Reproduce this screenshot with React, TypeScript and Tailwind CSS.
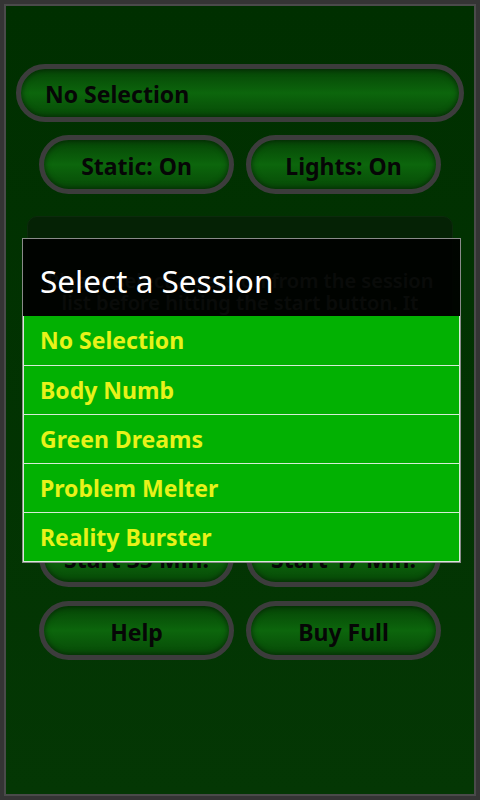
import React from "react";

const font = { fontFamily: '"Noto Sans", "Open Sans", "DejaVu Sans", sans-serif' };

function Pill({ label, className = "", align = "center" }: { label: string; className?: string; align?: "center" | "left" }) {
  return (
    <div
      className={`rounded-full border-[5px] border-[#3c3c3c] bg-gradient-to-b from-[#064506] via-[#0c660c] to-[#074a07] shadow-[inset_0_0_6px_rgba(0,0,0,0.6)] flex items-center pt-[3px] ${
        align === "center" ? "justify-center" : "justify-start pl-[24px]"
      } ${className}`}
    >
      <span className="text-[23px] font-bold text-[#060606] leading-none">{label}</span>
    </div>
  );
}

const items = ["No Selection", "Body Numb", "Green Dreams", "Problem Melter", "Reality Burster"];

export default function App() {
  return (
    <div className="relative w-[480px] h-[800px] bg-[#343434] p-[4px]" style={font}>
      <div className="w-full h-full border-[2px] border-[#4a4a4a] bg-gradient-to-b from-[#002f00] to-[#043704] flex flex-col pt-[58px]">
        <Pill label="No Selection" align="left" className="mx-[10px] h-[58px]" />
        <div className="mx-[33px] mt-[13px] grid grid-cols-2 gap-[12px]">
          <Pill label="Static: On" className="h-[59px]" />
          <Pill label="Lights: On" className="h-[59px]" />
        </div>
        <div className="mx-[21px] mt-[22px] h-[290px] rounded-[10px] border border-[#0c2a0c] bg-[#052205] pt-[53px] text-center text-[20px] font-semibold leading-[22px] text-[#5e6e5e] whitespace-nowrap">
          <div>Please select a session from the session</div>
          <div>list before hitting the start button. It</div>
          <div>will play for the chosen time.</div>
        </div>
        <div className="mx-[33px] mt-[22px] grid grid-cols-2 gap-[12px]">
          <Pill label="Start 35 Min." className="h-[59px]" />
          <Pill label="Start 17 Min." className="h-[59px]" />
        </div>
        <div className="mx-[33px] mt-[14px] grid grid-cols-2 gap-[12px]">
          <Pill label="Help" className="h-[59px]" />
          <Pill label="Buy Full" className="h-[59px]" />
        </div>
      </div>

      <div className="absolute left-[22px] top-[238px] w-[439px] border border-[#8a8a8a] bg-black/[0.9]">
        <div className="h-[77px] flex items-center pl-[17px] pt-[7px]">
          <span className="text-[31.5px] text-white leading-none">Select a Session</span>
        </div>
        <div className="border-x border-b border-[#d6ecd6] bg-[#02b102]">
          {items.map((it, i) => (
            <div
              key={it}
              className={`h-[49px] flex items-center pl-[16px] ${i > 0 ? "border-t border-[#d6ecd6]" : ""}`}
            >
              <span className="text-[23px] font-bold text-[#e8f21a] leading-none">{it}</span>
            </div>
          ))}
        </div>
      </div>
    </div>
  );
}
